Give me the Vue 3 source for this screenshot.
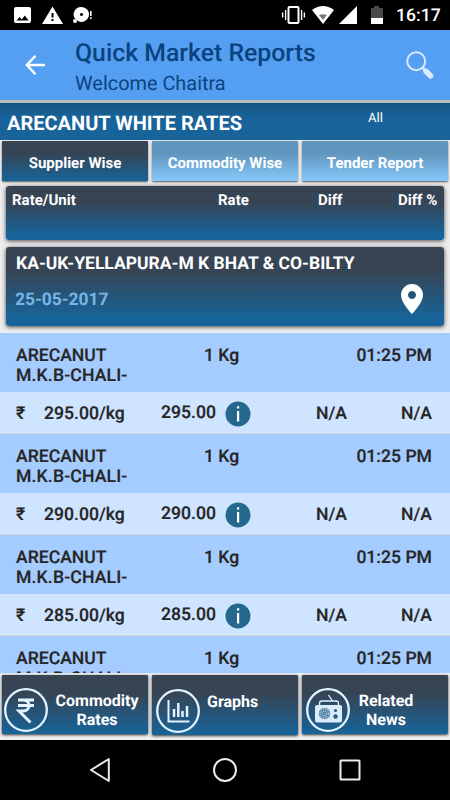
<template>
  <div class="screen">
    <div class="status">
      <svg class="status-left" width="100" height="30" viewBox="0 0 100 30">
        <path fill="#fff" fill-rule="evenodd" d="M16 7h13a2 2 0 0 1 2 2v12a2 2 0 0 1-2 2H16a2 2 0 0 1-2-2V9a2 2 0 0 1 2-2zM16.500 20.500h12l-3.700-5-3 4-2.200-2.500z" />
        <path fill="#fff" fill-rule="evenodd" d="M52.500 6.500L63 24H42zM51.500 13v4.500h2V13zm0 6v2h2v-2z" />
        <path fill="#fff" fill-rule="evenodd" d="M81.500 7a7.500 7.500 0 1 1-3.500 14.100L74.500 18a7.500 7.500 0 0 1 7-11zM81.500 12.900a1.600 1.600 0 1 0 .01 0z" />
        <circle cx="75" cy="21" r="2" fill="#fff" />
        <path fill="#fff" d="M90 11h1.600v5H90zm0 6.300h1.600v1.700H90z" />
      </svg>
      <svg class="status-right" width="110" height="30" viewBox="280 0 110 30">
        <rect x="288.500" y="7" width="10" height="16" rx="1" fill="none" stroke="#fff" stroke-width="2" />
        <path stroke="#fff" stroke-width="1.400" d="M285.600 10v10M282.600 12.500v5M301.600 10v10M304.400 12.500v5" />
        <path fill="#fff" d="M312 10q11-8 22 0L323 24z" />
        <path fill="#777" d="M319 15q4-1.500 8 0l-4 5z" />
        <path fill="#fff" d="M357 6v18h-18z" />
        <path fill="#484848" d="M371 8h3V6h5v2h4v10h-12z" />
        <path fill="#fff" d="M371 18h12v6h-12z" />
      </svg>
      <span class="clock">16:17</span>
    </div>

    <header class="header">
      <svg class="back" width="22" height="22" viewBox="0 0 22 22">
        <path d="M20 11H2.500M10.500 1.800L1.800 11l8.700 9.200" fill="none" stroke="#fff" stroke-width="2.400" />
      </svg>
      <div class="header-text">
        <div class="header-title">Quick Market Reports</div>
        <div class="header-sub">Welcome Chaitra</div>
      </div>
      <svg class="search" width="30" height="30" viewBox="0 0 30 30">
        <circle cx="11.200" cy="11.200" r="9" fill="none" stroke="#dceaff" stroke-width="2" />
        <path d="M17.500 17.500l4 4" stroke="#dceaff" stroke-width="2.500" />
        <path d="M21 21.300l4.500 4.500" stroke="#dceaff" stroke-width="5.500" stroke-linecap="round" />
      </svg>
    </header>

    <div class="titlebar">
      <span class="titlebar-name">ARECANUT WHITE RATES</span>
      <span class="titlebar-filter">All</span>
    </div>

    <nav class="tabs">
      <div v-for="(tab, index) in tabs" :key="tab" class="tab" :class="{ active: index === 0 }">{{ tab }}</div>
    </nav>

    <div class="columns">
      <span>Rate/Unit</span>
      <span>Rate</span>
      <span>Diff</span>
      <span>Diff %</span>
    </div>

    <div class="supplier">
      <div class="supplier-name">KA-UK-YELLAPURA-M K BHAT &amp; CO-BILTY</div>
      <div class="supplier-row">
        <span class="supplier-date">25-05-2017</span>
        <svg width="22" height="30" viewBox="0 0 22 30">
          <path fill="#fff" fill-rule="evenodd" d="M11 0a11 11 0 0 1 11 11C22 19 11 30 11 30S0 19 0 11A11 11 0 0 1 11 0zm0 7a4 4 0 1 0 .01 0z" />
        </svg>
      </div>
    </div>

    <div class="list">
      <div v-for="(item, index) in items" :key="index" class="item">
        <div class="item-head">
          <div class="item-name">
            <div>ARECANUT</div>
            <div class="item-grade">M.K.B-CHALI-</div>
          </div>
          <span class="item-unit">1 Kg</span>
          <span class="item-time">01:25 PM</span>
        </div>
        <div class="item-values">
          <span class="rupee">₹</span>
          <span class="per-kg">{{ item }}/kg</span>
          <span class="rate">{{ item }}</span>
          <svg class="info" width="26" height="26" viewBox="0 0 26 26">
            <circle cx="13" cy="13" r="12.500" fill="#25688d" />
            <path fill="#fff" d="M12 5.200h2.200v2.300H12zM12 10h2.200v10.500H12z" />
          </svg>
          <span class="diff">N/A</span>
          <span class="diff-pct">N/A</span>
        </div>
      </div>
    </div>

    <div class="actions">
      <div class="action">
        <svg width="44" height="44" viewBox="0 0 44 44">
          <circle cx="22" cy="22" r="20.800" fill="none" stroke="#e3f3ff" stroke-width="2.300" />
          <path d="M14 12h16M14 17.500h16M14 12h5c8 0 8 11 0 11h-4l11.500 11.500" fill="none" stroke="#e3f3ff" stroke-width="3" />
        </svg>
        <span class="action-text">Commodity<br />Rates</span>
      </div>
      <div class="action graphs">
        <svg width="44" height="44" viewBox="0 0 44 44">
          <circle cx="22" cy="22" r="20.800" fill="none" stroke="#e3f3ff" stroke-width="2.300" />
          <path d="M12.500 11v21.500h21" fill="none" stroke="#e3f3ff" stroke-width="2" />
          <path d="M18 28v-8M22.300 28V14M26.500 28v-6M31 28V17" fill="none" stroke="#e3f3ff" stroke-width="2.500" />
        </svg>
        <span class="action-text">Graphs</span>
      </div>
      <div class="action news">
        <svg width="44" height="44" viewBox="0 0 44 44">
          <circle cx="22" cy="22" r="20.800" fill="none" stroke="#e3f3ff" stroke-width="2.300" />
          <path d="M13.500 17v-1.500q0-2.500 2.500-2.500h14q2.500 0 2.500 2.500V17M26.500 13l-4-6" fill="none" stroke="#e3f3ff" stroke-width="1.300" />
          <rect x="9" y="17" width="27" height="17.500" rx="2" fill="#d8ecfb" />
          <circle cx="18.500" cy="25.500" r="5.800" fill="#5988a8" />
          <circle cx="18.500" cy="25.500" r="4.500" fill="none" stroke="#d8ecfb" stroke-width="1" stroke-dasharray="1.200 1.200" />
          <circle cx="18.500" cy="25.500" r="2.200" fill="none" stroke="#d8ecfb" stroke-width="1" stroke-dasharray="1 1" />
          <circle cx="29.500" cy="22.500" r="1.600" fill="#2b5978" />
          <circle cx="29.500" cy="28.500" r="2.200" fill="#2b5978" />
        </svg>
        <span class="action-text">Related<br />News</span>
      </div>
    </div>

    <div class="navbar">
      <svg width="450" height="60" viewBox="0 0 450 60" fill="none" stroke="#ececec" stroke-width="2">
        <path d="M108.800 19v22L91 30z" stroke-linejoin="round" />
        <circle cx="225" cy="30" r="11" />
        <rect x="340.500" y="20.500" width="19" height="19" rx="0.500" />
      </svg>
    </div>
  </div>
</template>

<script setup>
const tabs = ['Supplier Wise', 'Commodity Wise', 'Tender Report'];
const items = ['295.00', '290.00', '285.00', '280.00'];
</script>

<style>
body {
  margin: 0;
}
</style>

<style scoped>
.screen {
  display: flex;
  flex-direction: column;
  width: 450px;
  height: 800px;
  overflow: hidden;
  background: #ededed;
  font-family: Roboto, sans-serif;
  font-weight: 700;
  text-rendering: geometricPrecision;
  color: #fff;
}
.screen > * {
  box-sizing: border-box;
  flex-shrink: 0;
}
svg {
  display: block;
  flex-shrink: 0;
}
.status {
  display: flex;
  height: 30px;
  background: #000;
}
.status-right {
  margin-left: 180px;
}
.clock {
  padding-left: 6px;
  font-size: 17.600px;
  font-weight: 500;
  line-height: 32px;
}
.header {
  display: flex;
  height: 70px;
  background: #559ff2;
  color: #0b4380;
}
.back {
  margin: 24px 0 0 25px;
}
.header-text {
  width: 330px;
  margin-left: 28px;
}
.header-title {
  padding-top: 9px;
  font-size: 24.800px;
  font-weight: 500;
  line-height: 30px;
}
.header-sub {
  font-size: 19.900px;
  font-weight: 400;
  line-height: 30px;
}
.search {
  margin-top: 20px;
}
.titlebar {
  display: flex;
  height: 37px;
  margin-top: 3px;
  box-shadow: 0 -3px 0 #bcbcb8;
  background: linear-gradient(#165581, #18639a 40%, #18639a);
}
.titlebar-name {
  width: 361px;
  padding-left: 7px;
  box-sizing: border-box;
  font-size: 20px;
  line-height: 41px;
}
.titlebar-filter {
  padding-left: 7px;
  font-size: 13px;
  font-weight: 400;
  line-height: 32px;
}
.tabs {
  display: grid;
  grid-template-columns: repeat(3, 146px);
  gap: 4px;
  padding: 1px 2px 0;
  height: 46px;
}
.tab {
  height: 40px;
  border-radius: 1px;
  background: linear-gradient(#6095bd 30%, #86c9fb);
  box-shadow: 0 1px 2px #555;
  font-size: 15px;
  line-height: 44px;
  text-align: center;
}
.tab.active {
  background: linear-gradient(#364454 30%, #17649a);
}
.columns,
.supplier {
  width: 438px;
  margin-left: 6px;
  border-radius: 3px;
  background: linear-gradient(#364454 30%, #17649a 90%);
  box-shadow: 0 1px 4px #444;
}
.columns {
  display: grid;
  grid-template-columns: 206px 100px 80px 1fr;
  height: 54px;
  padding: 4px 0 0 6px;
  font-size: 15px;
  line-height: 20px;
}
.supplier {
  height: 79px;
  margin-top: 7px;
  padding: 5px 21px 0 10px;
}
.supplier-name {
  font-size: 17.500px;
  line-height: 25px;
}
.supplier-row {
  display: flex;
  justify-content: space-between;
  margin-top: 7px;
}
.supplier-date {
  margin-left: -1px;
  color: #75b7e8;
  font-size: 17.400px;
  line-height: 33px;
}
.list {
  height: 340px;
  margin-top: 7px;
  overflow: hidden;
  color: #262626;
  font-size: 17.600px;
  font-weight: 500;
  -webkit-text-stroke: 0.2px #262626;
}
.item {
  height: 101px;
}
.item-head {
  display: flex;
  height: 59px;
  padding: 13px 18px 0 16px;
  box-sizing: border-box;
  background: #a5ccff;
  line-height: 20px;
}
.item-name {
  width: 188px;
}
.item-grade {
  letter-spacing: 0.150px;
}
.item-time {
  margin-left: auto;
}
.item-values {
  display: flex;
  height: 42px;
  padding-left: 16px;
  box-sizing: border-box;
  border-bottom: 1px solid #d3d6d8;
  background: #cee4ff;
  line-height: 45px;
}
.rupee {
  width: 28px;
}
.per-kg {
  width: 117px;
}
.rate {
  width: 64px;
  line-height: 42px;
}
.info {
  margin-top: 9px;
}
.diff {
  width: 85px;
  margin-left: 65px;
}
.actions {
  display: grid;
  grid-template-columns: repeat(3, 146px);
  gap: 4px;
  height: 67px;
  padding: 2px 2px 0;
  background: #eeeff0;
}
.action {
  display: flex;
  height: 59px;
  box-sizing: border-box;
  padding: 13px 0 0 2px;
  border-radius: 1px;
  background: linear-gradient(#364454 30%, #17649a);
  box-shadow: 0 1px 3px #333;
}
.action.graphs {
  height: 60px;
  padding: 14px 0 0 4px;
}
.action-text {
  width: 88px;
  margin-top: 3px;
  margin-left: 5px;
  font-size: 16px;
  line-height: 19px;
  text-align: center;
}
.graphs .action-text {
  width: auto;
  margin-top: 3px;
  margin-left: 7px;
}
.action.news {
  padding-left: 4px;
}
.news .action-text {
  width: 62px;
}
.navbar {
  height: 60px;
  background: #000;
}
</style>
